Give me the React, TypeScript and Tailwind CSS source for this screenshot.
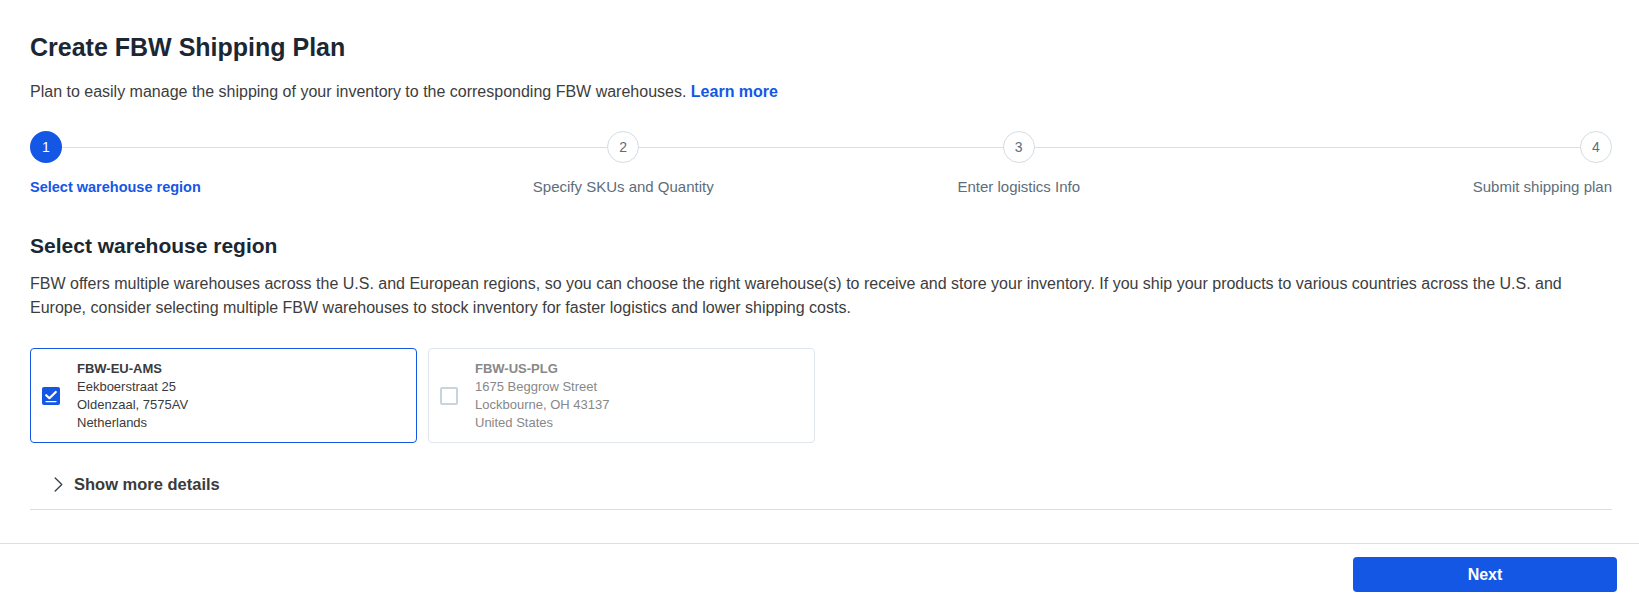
import React from "react";

type StepProps = {
  n: number;
  label: string;
  active?: boolean;
  align: "start" | "center" | "end";
};

const alignClass = {
  start: "justify-start",
  center: "justify-center",
  end: "justify-end",
};

const Step: React.FC<StepProps> = ({ n, label, active, align }) => (
  <div className="flex w-8 shrink-0 flex-col">
    <div
      className={`flex h-8 w-8 items-center justify-center rounded-full text-[14px] ${
        active
          ? "bg-[#1557e5] text-white"
          : "border border-[#d3dde3] bg-white text-[#5c6e7a]"
      }`}
    >
      {n}
    </div>
    <div className={`mt-[14px] flex whitespace-nowrap ${alignClass[align]}`}>
      <span
        className={
          active
            ? "text-[14.5px] leading-[20px] font-semibold text-[#1557e5]"
            : "text-[15px] leading-[20px] text-[#5c6e7a]"
        }
      >
        {label}
      </span>
    </div>
  </div>
);

const CheckedBox = () => (
  <svg width="18" height="18" viewBox="0 0 18 18" className="shrink-0">
    <rect x="0" y="0" width="18" height="18" rx="2" fill="#1557e5" />
    <path
      d="M4.2 8.2 L7.4 11.2 L13.8 5"
      fill="none"
      stroke="white"
      strokeWidth="2.2"
      strokeLinecap="round"
      strokeLinejoin="round"
    />
    <path d="M4 14.6 H14" stroke="white" strokeWidth="1.4" strokeLinecap="round" />
  </svg>
);

type Warehouse = {
  code: string;
  lines: string[];
  selected: boolean;
};

const warehouses: Warehouse[] = [
  {
    code: "FBW-EU-AMS",
    lines: ["Eekboerstraat 25", "Oldenzaal, 7575AV", "Netherlands"],
    selected: true,
  },
  {
    code: "FBW-US-PLG",
    lines: ["1675 Beggrow Street", "Lockbourne, OH 43137", "United States"],
    selected: false,
  },
];

const WarehouseCard: React.FC<{ w: Warehouse }> = ({ w }) => (
  <div
    className={`flex w-[387px] items-center rounded-[4px] border py-[10.5px] pl-[11px] ${
      w.selected ? "border-[#1557e5]" : "border-[#e0e6ea]"
    }`}
  >
    {w.selected ? (
      <CheckedBox />
    ) : (
      <div className="h-[18px] w-[18px] shrink-0 rounded-[2px] border-2 border-[#c8d4dc]" />
    )}
    <div
      className={`ml-[17px] text-[13px] leading-[18px] ${
        w.selected ? "text-[#3b3b3b]" : "text-[#888888]"
      }`}
    >
      <div className="font-bold">{w.code}</div>
      {w.lines.map((l) => (
        <div key={l}>{l}</div>
      ))}
    </div>
  </div>
);

export default function App() {
  return (
    <div className="min-h-[601px] w-full bg-white font-['Liberation_Sans',Arial,sans-serif]">
      <div className="pl-[30px] pr-[27px] pt-[32px]">
        <h1 className="text-[25px] leading-[30px] font-bold text-[#1b2733]">
          Create FBW Shipping Plan
        </h1>
        <p className="mt-[18px] text-[16px] leading-[24px] text-[#3d3d3d]">
          Plan to easily manage the shipping of your inventory to the
          corresponding FBW warehouses.{" "}
          <a href="#" className="font-bold text-[#1557e5]">
            Learn more
          </a>
        </p>

        <div className="mt-[27px] flex items-start">
          <Step n={1} label="Select warehouse region" active align="start" />
          <div className="mt-4 h-px flex-[3] bg-[#d6e1e6]" />
          <Step n={2} label="Specify SKUs and Quantity" align="center" />
          <div className="mt-4 h-px flex-[2] bg-[#d6e1e6]" />
          <Step n={3} label="Enter logistics Info" align="center" />
          <div className="mt-4 h-px flex-[3] bg-[#d6e1e6]" />
          <Step n={4} label="Submit shipping plan" align="end" />
        </div>

        <h2 className="mt-[35px] text-[21px] leading-[28px] font-bold text-[#1b2733]">
          Select warehouse region
        </h2>
        <p className="mt-[12px] text-[16px] leading-[24px] text-[#3d3d3d]">
          FBW offers multiple warehouses across the U.S. and European regions,
          so you can choose the right warehouse(s) to receive and store your
          inventory. If you ship your products to various countries across the
          U.S. and
          <br />
          Europe, consider selecting multiple FBW warehouses to stock inventory
          for faster logistics and lower shipping costs.
        </p>

        <div className="mt-[28px] flex gap-[11px]">
          {warehouses.map((w) => (
            <WarehouseCard key={w.code} w={w} />
          ))}
        </div>

        <button className="mt-[29px] flex h-[24px] items-center gap-[11px] pl-[24px] text-[16.5px] font-bold text-[#3b3b3b]">
          <svg width="9" height="15" viewBox="0 0 9 15">
            <path
              d="M1.2 1 L7.8 7.5 L1.2 14"
              fill="none"
              stroke="#3b4650"
              strokeWidth="1.4"
              strokeLinecap="round"
              strokeLinejoin="round"
            />
          </svg>
          Show more details
        </button>
        <div className="mt-[13px] h-px bg-[#d6e1e6]" />
      </div>

      <div className="mt-[33px] border-t border-[#d6e1e6]">
        <div className="flex justify-end pr-[22px] pt-[13px]">
          <button className="h-[35px] w-[264px] rounded-[4px] bg-[#1557e5] text-[16px] font-bold text-white">
            Next
          </button>
        </div>
      </div>
    </div>
  );
}
